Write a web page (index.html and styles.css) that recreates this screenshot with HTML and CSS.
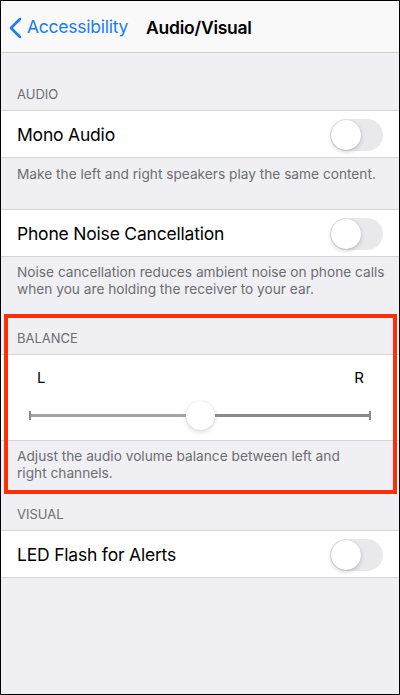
FILE: index.html
```html
<!DOCTYPE html>
<html lang="en">
<head>
    <meta charset="UTF-8">
    <meta name="viewport" content="width=device-width, initial-scale=1.0">
    <title>Audio/Visual</title>
    <link rel="stylesheet" href="styles.css">
</head>
<body>
    <div class="screen">
        <div class="nav-bar">
            <a class="back-link" href="#">
                <svg class="chevron" width="13" height="22" viewBox="0 0 13 22">
                    <path d="M11 2 L2 11 L11 20" fill="none" stroke="currentColor" stroke-width="2.6" stroke-linecap="round" stroke-linejoin="round"/>
                </svg>
                <span>Accessibility</span>
            </a>
            <h1 class="nav-title">Audio/Visual</h1>
        </div>

        <div class="section-header first">AUDIO</div>
        <div class="group">
            <div class="row">
                <span class="row-label">Mono Audio</span>
                <div class="switch"><div class="knob"></div></div>
            </div>
        </div>
        <div class="section-footer short">Make the left and right speakers play the same content.</div>

        <div class="group">
            <div class="row">
                <span class="row-label">Phone Noise Cancellation</span>
                <div class="switch"><div class="knob"></div></div>
            </div>
        </div>
        <div class="section-footer">Noise cancellation reduces ambient noise on phone calls when you are holding the receiver to your ear.</div>

        <!-- balance block, outlined in red -->
        <div class="highlight">
            <div class="section-header">BALANCE</div>
            <div class="group">
                <div class="balance">
                    <div class="balance-labels">
                        <span>L</span>
                        <span>R</span>
                    </div>
                    <div class="slider">
                        <div class="track left"></div>
                        <div class="thumb"></div>
                        <div class="track right"></div>
                    </div>
                </div>
            </div>
            <div class="section-footer">Adjust the audio volume balance between left and right channels.</div>
        </div>

        <div class="section-header visual">VISUAL</div>
        <div class="group">
            <div class="row">
                <span class="row-label">LED Flash for Alerts</span>
                <div class="switch"><div class="knob"></div></div>
            </div>
        </div>
    </div>
</body>
</html>
```

FILE: styles.css
```css
:root {
    --bg: #efeff4;
    --sep: #d4d4d8;
    --muted: #6d6d72;
    --blue: #1a7cf0;
    --red: #fa3008;
}

* {
    box-sizing: border-box;
}

body {
    margin: 0;
    padding: 0;
    background: #fff;
    font-family: Inter, "Liberation Sans", sans-serif;
}

.screen {
    width: 400px;
    height: 695px;
    border: 1px solid #000;
    background: var(--bg);
    overflow: hidden;
    display: flex;
    flex-direction: column;
}

.nav-bar {
    height: 52px;
    flex-shrink: 0;
    background: #f9f9fa;
    border-bottom: 1px solid #cfcfd3;
    display: flex;
    align-items: center;
    padding: 0 0 0 8px;
}

.back-link {
    display: flex;
    align-items: center;
    gap: 5px;
    color: var(--blue);
    text-decoration: none;
    font-size: 17.5px;
    letter-spacing: -0.25px;
}

.chevron {
    margin-top: 2px;
}

.nav-title {
    margin: 2px 0 0 18px;
    font-size: 17.5px;
    font-weight: 600;
    letter-spacing: -0.25px;
    color: #000;
}

.section-header {
    font-size: 13px;
    color: var(--muted);
    padding: 0 16px 8px;
    line-height: 16px;
    display: flex;
    align-items: flex-end;
    flex-shrink: 0;
}

.section-header.first {
    height: 57px;
}

.section-header.visual {
    height: 39px;
}

.group {
    background: #fff;
    border-top: 1px solid var(--sep);
    border-bottom: 1px solid var(--sep);
    flex-shrink: 0;
}

.row {
    height: 46px;
    display: flex;
    align-items: center;
    justify-content: space-between;
    padding: 0 16px;
}

.row-label {
    font-size: 17.5px;
    color: #000;
    letter-spacing: -0.2px;
}

.switch {
    width: 53px;
    height: 32px;
    border-radius: 16px;
    background: #e9e9eb;
    padding: 1px;
    margin-top: 1px;
}

.knob {
    width: 30px;
    height: 30px;
    border-radius: 50%;
    background: #fff;
    box-shadow: 0 2px 4px rgba(0,0,0,0.18), 0 0 1px rgba(0,0,0,0.2);
}

.section-footer {
    font-size: 13.7px;
    line-height: 17px;
    color: var(--muted);
    padding: 7px 6px 0 16px;
    height: 60px;
    flex-shrink: 0;
}

.section-footer.short {
    height: 51px;
    padding-top: 8px;
}

.highlight {
    position: relative;
    flex-shrink: 0;
}

.highlight .section-header {
    height: 37px;
}

.highlight .section-footer {
    height: 50px;
    padding-right: 40px;
}

.highlight::after {
    content: '';
    position: absolute;
    top: -3px;
    bottom: -3px;
    left: 3px;
    right: 2px;
    border: 4px solid var(--red);
    pointer-events: none;
}

.balance {
    height: 85px;
    padding: 14px 28px 0 28px;
}

.balance-labels {
    display: flex;
    justify-content: space-between;
    padding: 0 7px 0 8px;
    font-size: 15px;
    line-height: 18px;
    color: #000;
}

.slider {
    display: flex;
    align-items: center;
    height: 30px;
    margin-top: 13px;
}

.track {
    flex: 1;
    height: 3px;
    position: relative;
}

.track.left {
    background: #a3a3a6;
}

.track.right {
    background: #8a8a8e;
}

/* small end caps on the slider track */
.track.left::before,
.track.right::after {
    content: '';
    position: absolute;
    top: -3px;
    width: 2px;
    height: 9px;
    background: #8a8a8e;
}

.track.left::before {
    left: 0;
}

.track.right::after {
    right: 0;
}

.thumb {
    width: 29px;
    height: 29px;
    border-radius: 50%;
    background: #fff;
    box-shadow: 0 2px 5px rgba(0,0,0,0.15), 0 0 1px rgba(0,0,0,0.15);
    flex-shrink: 0;
}
```
